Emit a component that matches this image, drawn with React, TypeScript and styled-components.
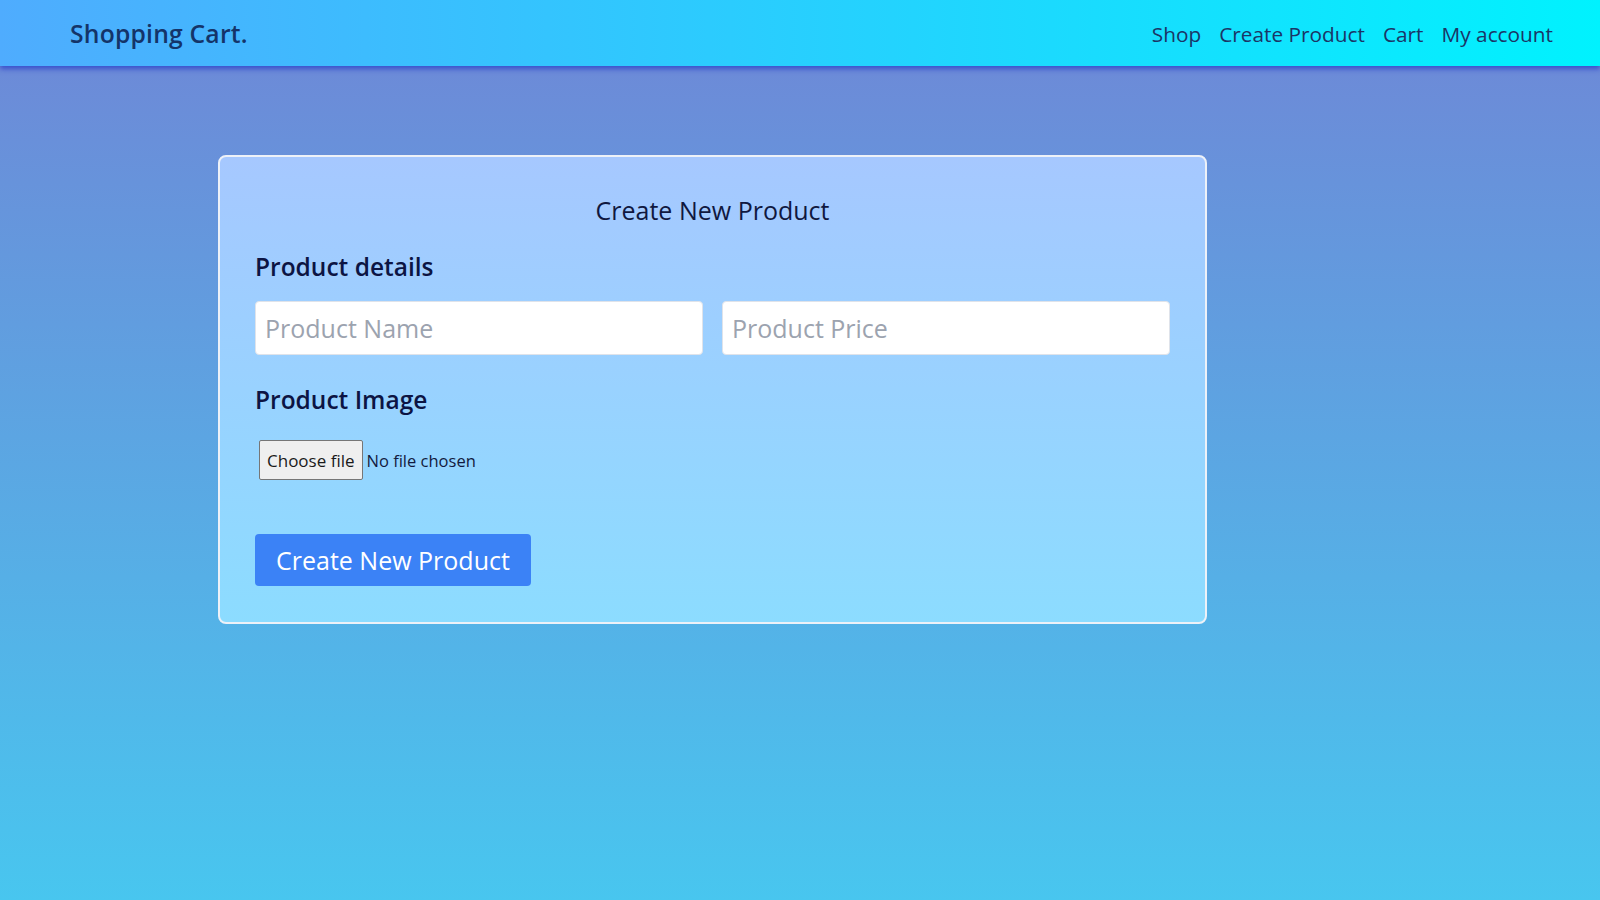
import React from "react";
import styled, { createGlobalStyle } from "styled-components";

const GlobalStyle = createGlobalStyle`
  html, body { margin: 0; padding: 0; }
  body {
    font-family: "Open Sans", "Noto Sans", sans-serif;
    min-height: 100vh;
    background: linear-gradient(to top, #48c6ef 0%, #6f86d6 100%);
    background-attachment: fixed;
  }
  * { box-sizing: border-box; }
`;

const Page = styled.div`
  min-height: 100vh;
  display: flex;
  flex-direction: column;
`;

const NavBar = styled.header`
  height: 66px;
  display: flex;
  align-items: center;
  justify-content: space-between;
  padding: 1px 47px 0 70px;
  background: linear-gradient(to right, #4facfe 0%, #00f2fe 100%);
  box-shadow: 0 3px 5px rgba(40, 60, 200, 0.75);
  position: relative;
  z-index: 1;
`;

const Brand = styled.a`
  font-size: 24.7px;
  font-weight: 600;
  color: #143469;
  text-decoration: none;
  letter-spacing: 0.2px;
`;

const NavLinks = styled.nav`
  display: flex;
  align-items: center;
  gap: 18px;
`;

const NavLink = styled.a`
  font-size: 20.8px;
  font-weight: 400;
  color: #1b3566;
  text-decoration: none;
`;

const Main = styled.main`
  padding: 89px 0 0 218px;
`;

const Card = styled.section`
  width: 989px;
  border: 2px solid #edf1f8;
  border-radius: 8px;
  padding: 36px 35px 36px;
  background: linear-gradient(to bottom, #a6c8ff 0%, #8cdcff 100%);
  display: flex;
  flex-direction: column;
`;

const CardTitle = styled.h2`
  margin: 0;
  text-align: center;
  font-size: 25px;
  line-height: 34px;
  font-weight: 400;
  color: #10183f;
`;

const SectionLabel = styled.h3<{ $gap: number }>`
  margin: ${(p) => p.$gap}px 0 0;
  font-size: 24.5px;
  line-height: 28px;
  font-weight: 600;
  color: #0c1443;
`;

const FieldRow = styled.div`
  display: grid;
  grid-template-columns: 1fr 1fr;
  gap: 19px;
  margin-top: 20px;
`;

const TextInput = styled.input`
  height: 54px;
  width: 100%;
  border: 1px solid #dfe3ea;
  border-radius: 4px;
  background: #fff;
  padding: 0 9px;
  font-family: inherit;
  font-size: 25px;
  color: #111;
  outline: none;
  &::placeholder { color: #9ca3af; }
`;

const FileRow = styled.div`
  display: flex;
  align-items: center;
  gap: 4px;
  margin: 26px 0 0 4px;
`;

const FileButton = styled.button`
  height: 40px;
  padding: 0 7px;
  border: 1px solid #767676;
  border-radius: 2px;
  background: #efefef;
  font-family: inherit;
  font-size: 17px;
  color: #1a1a1a;
`;

const FileText = styled.span`
  font-size: 16.5px;
  color: #121a40;
`;

const SubmitButton = styled.button`
  align-self: flex-start;
  margin-top: 54px;
  height: 52px;
  padding: 0 21px;
  border: none;
  border-radius: 4px;
  background: #3b82f6;
  color: #fff;
  font-family: inherit;
  font-size: 25px;
  font-weight: 400;
`;

export default function App() {
  return (
    <Page>
      <GlobalStyle />
      <NavBar>
        <Brand href="#">Shopping Cart.</Brand>
        <NavLinks>
          <NavLink href="#">Shop</NavLink>
          <NavLink href="#">Create Product</NavLink>
          <NavLink href="#">Cart</NavLink>
          <NavLink href="#">My account</NavLink>
        </NavLinks>
      </NavBar>
      <Main>
        <Card>
          <CardTitle>Create New Product</CardTitle>
          <SectionLabel $gap={26}>Product details</SectionLabel>
          <FieldRow>
            <TextInput placeholder="Product Name" />
            <TextInput placeholder="Product Price" />
          </FieldRow>
          <SectionLabel $gap={31}>Product Image</SectionLabel>
          <FileRow>
            <FileButton type="button">Choose file</FileButton>
            <FileText>No file chosen</FileText>
          </FileRow>
          <SubmitButton type="button">Create New Product</SubmitButton>
        </Card>
      </Main>
    </Page>
  );
}
